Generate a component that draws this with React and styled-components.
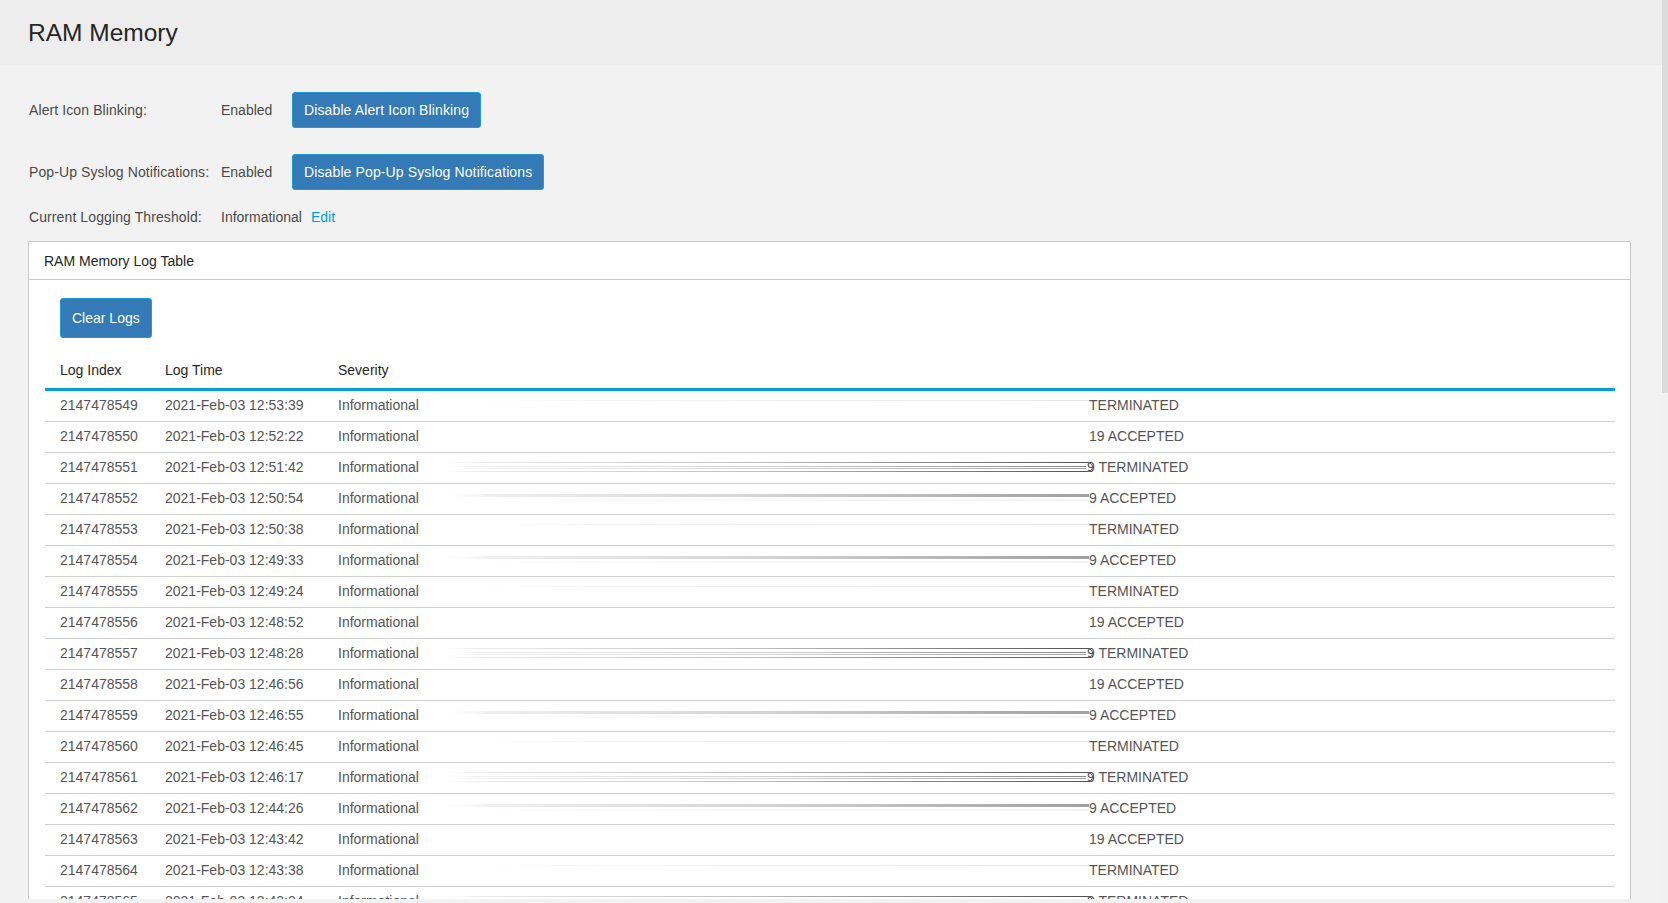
import React from 'react'
import styled, { createGlobalStyle } from 'styled-components'

const rows = [
    ['2147478549', '2021-Feb-03 12:53:39', 'TERMINATED', 'faint'],
    ['2147478550', '2021-Feb-03 12:52:22', '19 ACCEPTED', 'none'],
    ['2147478551', '2021-Feb-03 12:51:42', '9 TERMINATED', 'outline'],
    ['2147478552', '2021-Feb-03 12:50:54', '9 ACCEPTED', 'bar'],
    ['2147478553', '2021-Feb-03 12:50:38', 'TERMINATED', 'faint'],
    ['2147478554', '2021-Feb-03 12:49:33', '9 ACCEPTED', 'bar'],
    ['2147478555', '2021-Feb-03 12:49:24', 'TERMINATED', 'faint'],
    ['2147478556', '2021-Feb-03 12:48:52', '19 ACCEPTED', 'none'],
    ['2147478557', '2021-Feb-03 12:48:28', '9 TERMINATED', 'outline'],
    ['2147478558', '2021-Feb-03 12:46:56', '19 ACCEPTED', 'none'],
    ['2147478559', '2021-Feb-03 12:46:55', '9 ACCEPTED', 'bar'],
    ['2147478560', '2021-Feb-03 12:46:45', 'TERMINATED', 'faint'],
    ['2147478561', '2021-Feb-03 12:46:17', '9 TERMINATED', 'outline'],
    ['2147478562', '2021-Feb-03 12:44:26', '9 ACCEPTED', 'bar'],
    ['2147478563', '2021-Feb-03 12:43:42', '19 ACCEPTED', 'none'],
    ['2147478564', '2021-Feb-03 12:43:38', 'TERMINATED', 'faint'],
    ['2147478565', '2021-Feb-03 12:43:24', '9 TERMINATED', 'outline'],
]

// the smeared glyph runs that show up in front of some messages
function Smear({ kind }) {
    return (
        <SmearSvg width="653" height="28" viewBox="0 0 653 28">
            <defs>
                <linearGradient id="smDark" gradientUnits="userSpaceOnUse" x1="0" x2="657" y1="0" y2="0">
                    <stop offset="0" stopColor="#ffffff" stopOpacity="0" />
                    <stop offset="0.06" stopColor="#ececec" />
                    <stop offset="0.5" stopColor="#bdbdbd" />
                    <stop offset="1" stopColor="#505050" />
                </linearGradient>
                <linearGradient id="smBar" gradientUnits="userSpaceOnUse" x1="0" x2="653" y1="0" y2="0">
                    <stop offset="0" stopColor="#ffffff" stopOpacity="0" />
                    <stop offset="0.08" stopColor="#f0f0f0" />
                    <stop offset="0.5" stopColor="#d4d4d4" />
                    <stop offset="1" stopColor="#a0a0a0" />
                </linearGradient>
                <linearGradient id="smFaint" gradientUnits="userSpaceOnUse" x1="0" x2="653" y1="0" y2="0">
                    <stop offset="0" stopColor="#ffffff" stopOpacity="0" />
                    <stop offset="0.25" stopColor="#f3f3f3" />
                    <stop offset="1" stopColor="#e8e8e8" />
                </linearGradient>
            </defs>
            {kind === 'outline' && (
                <g fill="none">
                    <path d="M0 9.5 H652 A4.5 4.5 0 0 1 652 18.5 H0" stroke="url(#smDark)" strokeWidth="1" />
                    <path d="M0 13.5 H650" stroke="url(#smDark)" strokeWidth="1" opacity="0.7" />
                    <path d="M0 15.5 H650" stroke="url(#smBar)" strokeWidth="1" />
                </g>
            )}
            {kind === 'bar' && (
                <g fill="none">
                    <path d="M0 11.5 H653" stroke="url(#smBar)" strokeWidth="3" />
                    <path d="M0 16 H653" stroke="url(#smFaint)" strokeWidth="1" />
                </g>
            )}
            {kind === 'faint' && (
                <path d="M0 9.5 H653" stroke="url(#smFaint)" strokeWidth="1" fill="none" />
            )}
        </SmearSvg>
    )
}

function App() {
    return (
        <>
            <GlobalStyle />
            <Frame>
                <Main>
                    <PageHeader>
                        <Title>RAM Memory</Title>
                    </PageHeader>

                    <Content>
                        <SettingRow>
                            <Label>Alert Icon Blinking:</Label>
                            <Value>Enabled</Value>
                            <Button>Disable Alert Icon Blinking</Button>
                        </SettingRow>
                        <SettingRow $gap={26}>
                            <Label>Pop-Up Syslog Notifications:</Label>
                            <Value>Enabled</Value>
                            <Button>Disable Pop-Up Syslog Notifications</Button>
                        </SettingRow>
                        <SettingRow $gap={17} $short>
                            <Label>Current Logging Threshold:</Label>
                            <Value>
                                Informational<EditLink>Edit</EditLink>
                            </Value>
                        </SettingRow>

                        <Card>
                            <CardHeader>RAM Memory Log Table</CardHeader>
                            <CardBody>
                                <Toolbar>
                                    <Button $tall>Clear Logs</Button>
                                </Toolbar>
                                <LogTable>
                                    <colgroup>
                                        <col style={{ width: 105 }} />
                                        <col style={{ width: 173 }} />
                                        <col style={{ width: 107 }} />
                                        <col />
                                    </colgroup>
                                    <thead>
                                        <tr>
                                            <Th>Log Index</Th>
                                            <Th>Log Time</Th>
                                            <Th>Severity</Th>
                                            <Th></Th>
                                        </tr>
                                    </thead>
                                    <tbody>
                                        {rows.map(([idx, time, msg, kind]) => (
                                            <tr key={idx}>
                                                <Td>{idx}</Td>
                                                <Td>{time}</Td>
                                                <Td>Informational</Td>
                                                <MsgTd>
                                                    <MsgWrap>
                                                        <Smear kind={kind} />
                                                        <MsgText $tucked={kind === 'outline'}>{msg}</MsgText>
                                                    </MsgWrap>
                                                </MsgTd>
                                            </tr>
                                        ))}
                                    </tbody>
                                </LogTable>
                            </CardBody>
                        </Card>
                    </Content>
                </Main>
                <ScrollTrack>
                    <ScrollThumb />
                </ScrollTrack>
            </Frame>
        </>
    )
}

const GlobalStyle = createGlobalStyle`
body{
    margin:0;
    overflow:hidden;
    font-family:"Liberation Sans", Arial, sans-serif;
    font-size:14px;
    color:#4a4a4a;
    background:#f2f2f2;
}
`

const Frame = styled.div`
display:flex;
height:903px;
background:#f2f2f2;
`

const Main = styled.div`
flex:1;
min-width:0;
height:899px;
overflow:hidden;
display:flex;
flex-direction:column;
`

const PageHeader = styled.header`
flex:0 0 65px;
display:flex;
align-items:center;
padding-left:28px;
background:#ededed;
`

const Title = styled.h1`
margin:0;
font-size:24.5px;
font-weight:normal;
color:#262626;
`

const Content = styled.div`
padding:27px 31px 0 28px;
`

const SettingRow = styled.div`
display:grid;
grid-template-columns:193px 71px auto;
align-items:center;
height:${p => (p.$short ? 20 : 36)}px;
margin-top:${p => p.$gap || 0}px;
`

const Label = styled.span`
padding-left:1px;
color:#4a4a4a;
letter-spacing:0.1px;
`

const Value = styled.span`
color:#4a4a4a;
white-space:nowrap;
`

const EditLink = styled.a`
margin-left:9px;
color:#049fd9;
cursor:pointer;
`

const Button = styled.button`
justify-self:start;
height:${p => (p.$tall ? 40 : 36)}px;
padding:0 11px;
border:1px solid #1e9ad6;
border-radius:3px;
background:#337ab7;
color:#fff;
font-family:inherit;
font-size:14px;
letter-spacing:${p => (p.$tall ? 0 : 0.12)}px;
cursor:pointer;
`

const Card = styled.section`
margin-top:14px;
background:#fff;
border:1px solid #cacaca;
`

const CardHeader = styled.div`
height:37px;
display:flex;
align-items:center;
padding:0 15px;
border-bottom:1px solid #cacaca;
color:#262626;
`

const CardBody = styled.div`
padding:0 15px 0 16px;
`

const Toolbar = styled.div`
padding:18px 15px 0;
`

const LogTable = styled.table`
width:100%;
margin-top:14px;
border-collapse:collapse;
table-layout:fixed;
`

const Th = styled.th`
height:36px;
padding:0 15px;
text-align:left;
font-weight:normal;
color:#262626;
border-bottom:3px solid #049fd9;
`

const Td = styled.td`
box-sizing:border-box;
height:31px;
padding:0 15px 2px;
border-bottom:1px solid #d2d2d2;
color:#555;
white-space:nowrap;
`

const MsgTd = styled(Td)`
padding:0 0 2px 6px;
`

const MsgWrap = styled.div`
display:flex;
align-items:center;
height:28px;
`

const SmearSvg = styled.svg`
flex:0 0 653px;
overflow:visible;
`

const MsgText = styled.span`
margin-left:${p => (p.$tucked ? -2 : 0)}px;
color:#555;
`

const ScrollTrack = styled.div`
flex:0 0 6px;
background:#f1f1f1;
`

const ScrollThumb = styled.div`
height:393px;
background:#dcdcdc;
`

export default App
